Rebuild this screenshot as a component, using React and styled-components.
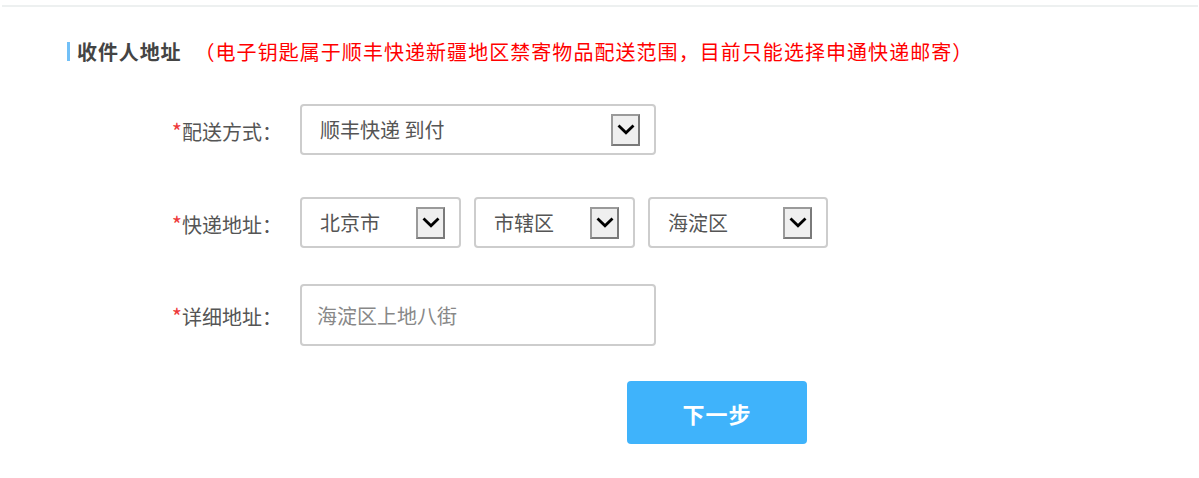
import React from "react";
import styled, { createGlobalStyle } from "styled-components";

const Global = createGlobalStyle`
  html, body { margin: 0; padding: 0; background: #fff; }
  body { font-family: "Noto Sans CJK SC", "Noto Sans", sans-serif; }
  * { box-sizing: border-box; }
`;

const Page = styled.div`
  width: 1199px;
  height: 478px;
  background: #fff;
  overflow: hidden;
`;

const TopRule = styled.div`
  margin: 5px 1px 0 2px;
  height: 2px;
  background: #edf0f0;
`;

const TitleRow = styled.div`
  display: flex;
  align-items: center;
  height: 30px;
  margin-top: 29px;
  padding-left: 67px;
`;

const TitleBar = styled.span`
  width: 3px;
  height: 19px;
  background: #72c0f7;
  margin-right: 7px;
`;

const Title = styled.span`
  font-size: 20px;
  font-weight: 700;
  color: #444;
  letter-spacing: 0.9px;
`;

const Notice = styled.span`
  margin-left: 13px;
  font-size: 20px;
  color: #f00;
  letter-spacing: 1.05px;
`;

const Form = styled.div`
  display: flex;
  flex-direction: column;
  margin-top: ${(p) => p.$top}px;
`;

const Row = styled.div`
  display: flex;
  align-items: center;
  gap: 18px;
  margin-top: ${(p) => p.$top || 0}px;
`;

const Label = styled.div`
  width: 282px;
  text-align: right;
  font-size: 20px;
  color: #555;
  white-space: nowrap;
`;

const Star = styled.span`
  color: #ee3a3a;
  font-size: 22px;
`;

const Fields = styled.div`
  display: flex;
  gap: 13px;
`;

const Select = styled.div`
  width: ${(p) => p.$w}px;
  height: 51px;
  border: 2px solid #cdcdcd;
  border-radius: 4px;
  display: flex;
  align-items: center;
  justify-content: space-between;
  padding: 0 14px 0 18px;
  font-size: 20px;
  color: #555;
`;

const ArrowBox = styled.div`
  width: 29px;
  height: 32px;
  border: 2px solid #7a7a7a;
  border-top-color: #9a9a9a;
  border-left-color: #9a9a9a;
  background: #efefef;
  display: flex;
  align-items: center;
  justify-content: center;
`;

const Input = styled.div`
  width: 356px;
  height: 62px;
  border: 2px solid #cdcdcd;
  border-radius: 4px;
  display: flex;
  align-items: center;
  padding-left: 15px;
  font-size: 20px;
  color: #888;
`;

const ButtonRow = styled.div`
  display: flex;
  padding-left: 627px;
  margin-top: 35px;
`;

const Button = styled.button`
  width: 180px;
  height: 63px;
  border: none;
  border-radius: 4px;
  background: #3fb3fb;
  color: #fff;
  font-family: "Noto Sans CJK SC", sans-serif;
  font-size: 22px;
  font-weight: 700;
  letter-spacing: 1px;
`;

const Chevron = () => (
  <svg width="18" height="11" viewBox="0 0 18 11">
    <path d="M1.5 1.5 L9 8.8 L16.5 1.5" fill="none" stroke="#000" strokeWidth="2.8" />
  </svg>
);

const Drop = ({ w, children }) => (
  <Select $w={w}>
    <span>{children}</span>
    <ArrowBox>
      <Chevron />
    </ArrowBox>
  </Select>
);

export default function App() {
  return (
    <Page>
      <Global />
      <TopRule />
      <TitleRow>
        <TitleBar />
        <Title>收件人地址</Title>
        <Notice>（电子钥匙属于顺丰快递新疆地区禁寄物品配送范围，目前只能选择申通快递邮寄）</Notice>
      </TitleRow>
      <Form $top={38}>
        <Row>
          <Label>
            <Star>*</Star>配送方式：
          </Label>
          <Drop w={356}>顺丰快递 到付</Drop>
        </Row>
        <Row $top={42}>
          <Label>
            <Star>*</Star>快递地址：
          </Label>
          <Fields>
            <Drop w={161}>北京市</Drop>
            <Drop w={161}>市辖区</Drop>
            <Drop w={180}>海淀区</Drop>
          </Fields>
        </Row>
        <Row $top={36}>
          <Label>
            <Star>*</Star>详细地址：
          </Label>
          <Input>海淀区上地八街</Input>
        </Row>
      </Form>
      <ButtonRow>
        <Button>下一步</Button>
      </ButtonRow>
    </Page>
  );
}
